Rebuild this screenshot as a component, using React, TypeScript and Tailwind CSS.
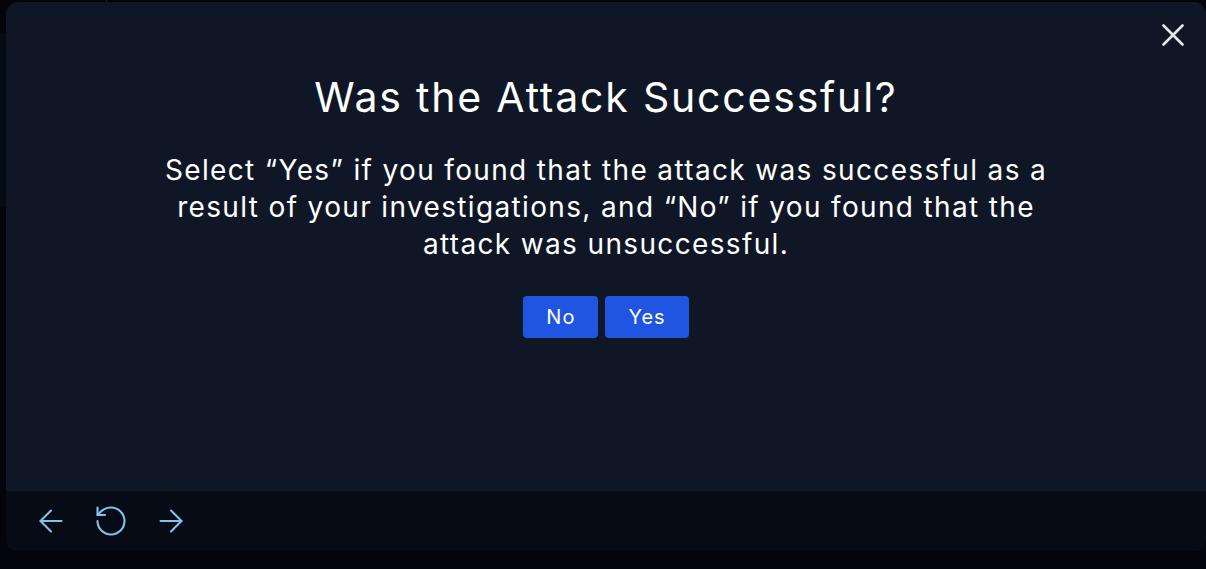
import { ArrowLeft, ArrowRight, RotateCcw } from 'lucide-react';

function CloseIcon() {
  return (
    <svg width="22" height="22" viewBox="0 0 22 22" fill="none" stroke="currentColor" strokeWidth="2.6" strokeLinecap="round">
      <path d="M1.5 1.5 20.5 20.5" />
      <path d="M20.5 1.5 1.5 20.5" />
    </svg>
  );
}

export default function App() {
  return (
    <main className="relative h-[569px] w-full overflow-hidden bg-[#03040c] font-['Inter',sans-serif]">
      {/* page behind the dialog, dimmed */}
      <div className="flex h-[33px] items-end overflow-hidden">
        <div className="h-full w-[107px] border-r border-[#161b26]" />
        <p className="mb-[30px] ml-[34px] text-[28px] leading-none tracking-[1.5px] text-[#5b6270]">Was the attack successful?</p>
      </div>
      <div className="h-[174px] w-[6px] bg-[#060a17]" />

      <div className="absolute left-[6px] top-[2px] flex h-[549px] w-[1200px] flex-col overflow-hidden rounded-xl bg-[#0f1726]">
        <div className="relative flex-1 pt-[71px] text-center text-white">
          <button className="absolute right-[22px] top-[22px] text-[#e5e7eb]">
            <CloseIcon />
          </button>
          <h1 className="text-[41px] leading-[48px] tracking-[1.8px]">Was the Attack Successful?</h1>
          <p className="mt-[31px] text-[28px] leading-[37px] tracking-[1.35px]">
            Select “Yes” if you found that the attack was successful as a
            <br />
            result of your investigations, and “No” if you found that the
            <br />
            attack was unsuccessful.
          </p>
          <div className="mt-[33px] flex justify-center gap-[7px]">
            <button className="h-[42px] rounded bg-[#1f55e0] px-[23px] text-[20px] tracking-[1px] text-white">No</button>
            <button className="h-[42px] rounded bg-[#1f55e0] px-[23px] text-[20px] tracking-[1px] text-white">Yes</button>
          </div>
        </div>

        <div className="flex h-[60px] items-center gap-6 bg-[#060b16] pl-[27px] text-[#7fc4ea]">
          <ArrowLeft size={36} strokeWidth={1.4} />
          <RotateCcw size={36} strokeWidth={1.4} />
          <ArrowRight size={36} strokeWidth={1.4} />
        </div>
      </div>
    </main>
  );
}
